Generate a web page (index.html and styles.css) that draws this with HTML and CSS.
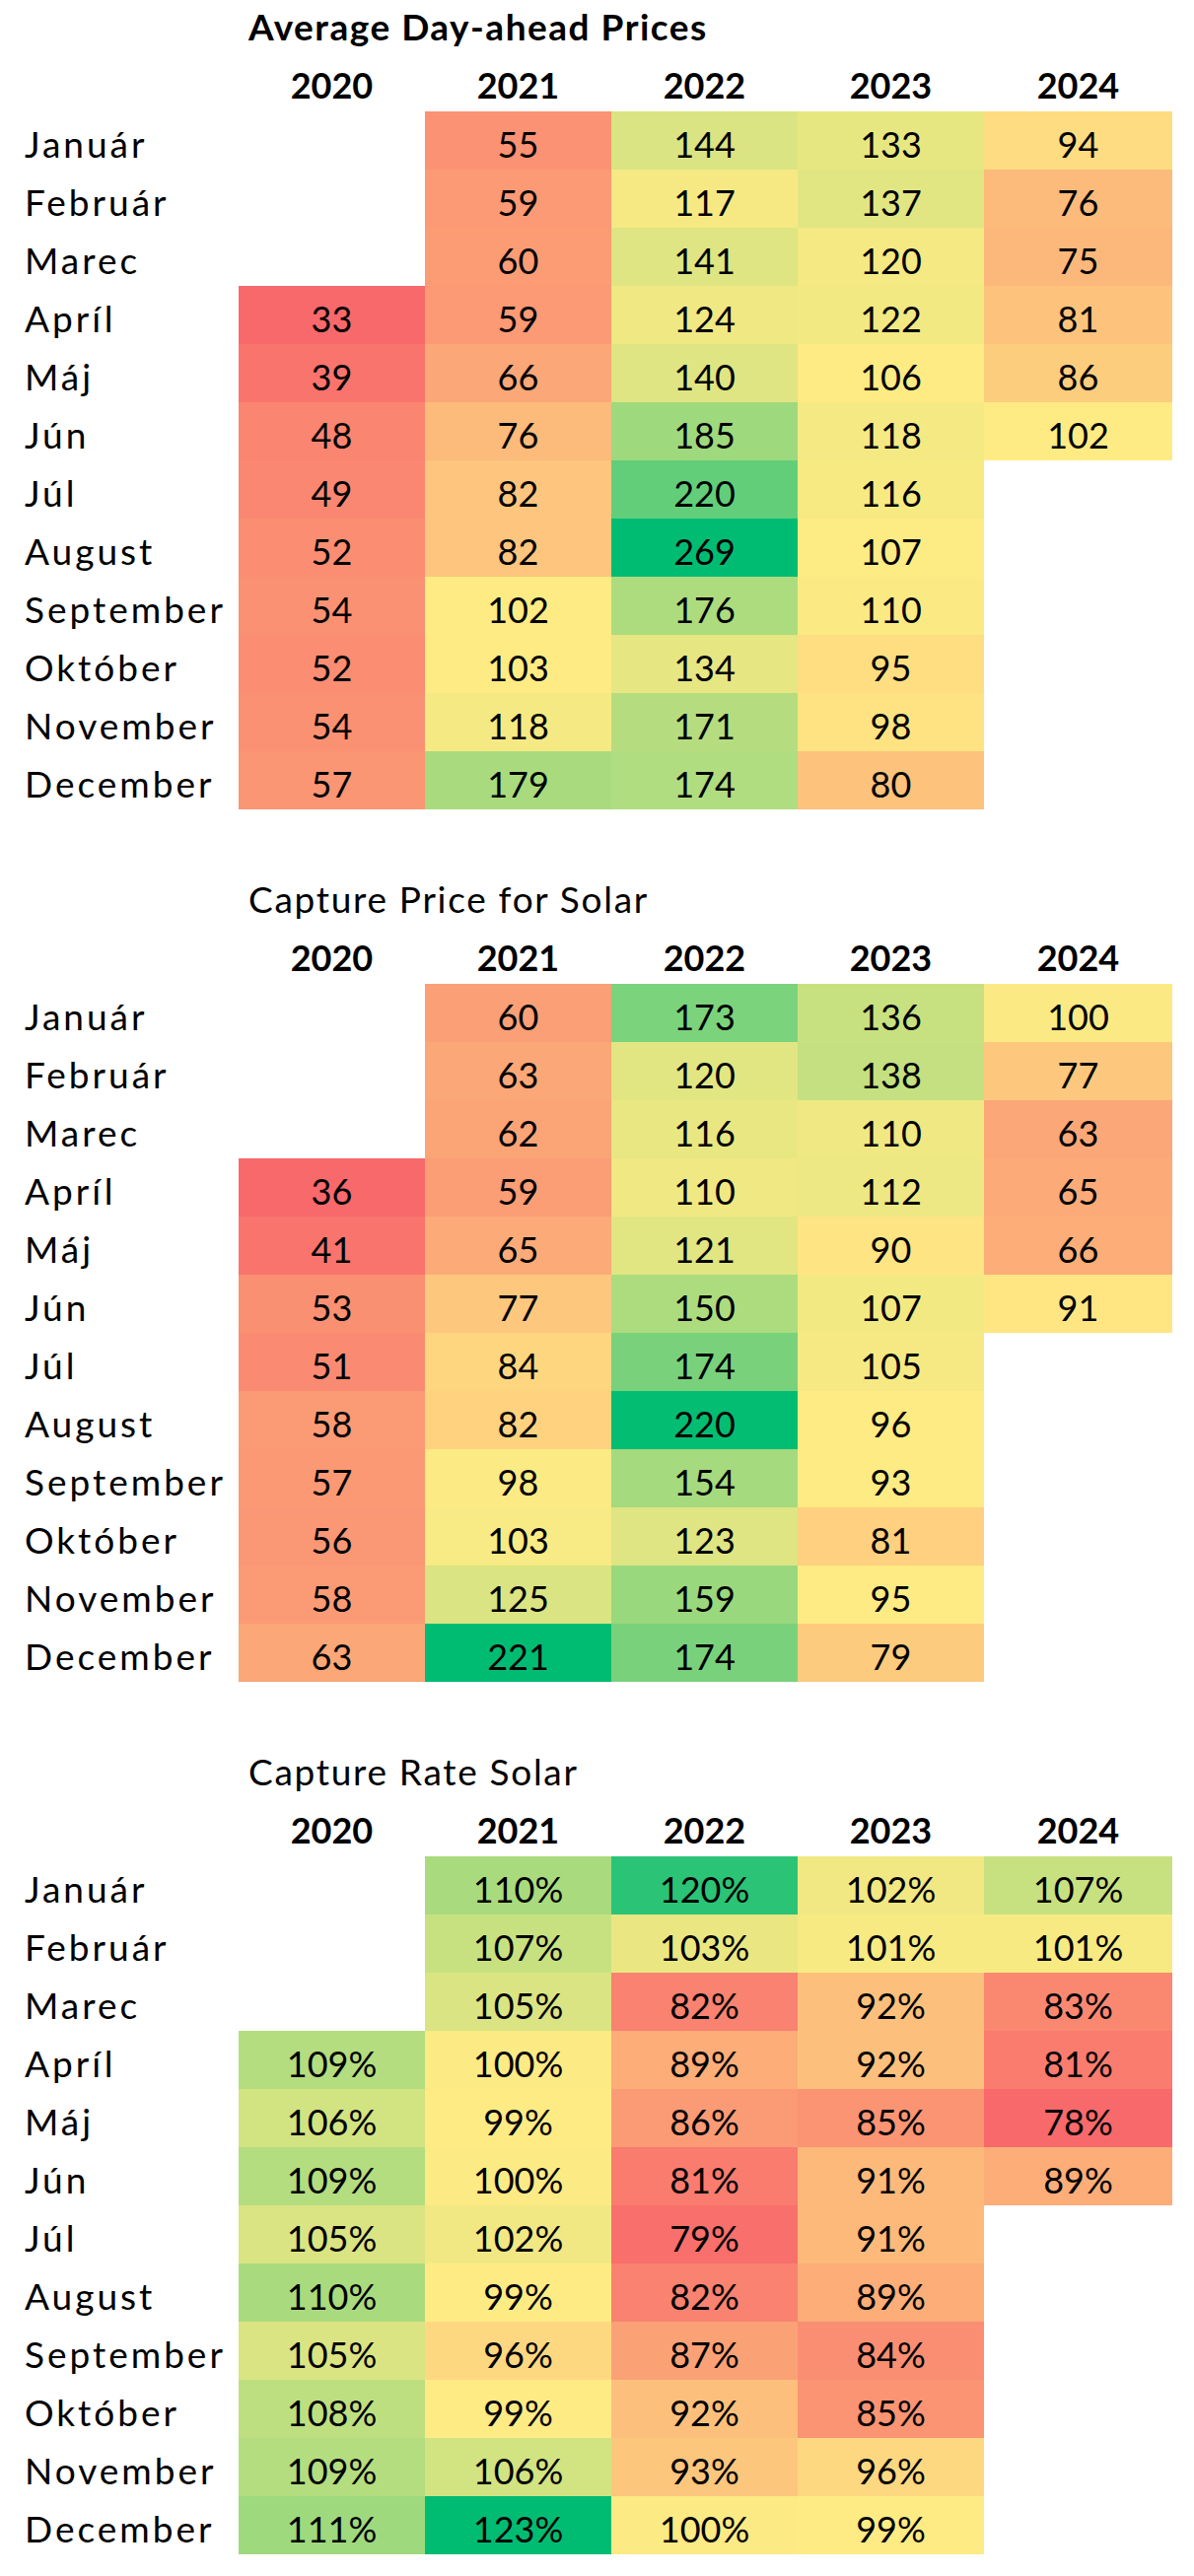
FILE: index.html
```html
<!DOCTYPE html>
<html lang="sk">
<head>
<meta charset="utf-8">
<title>Prices</title>
<link rel="stylesheet" href="styles.css">
</head>
<body>
<main class="sheet">
  <section class="block first">
    <div class="title bold">Average Day-ahead Prices</div>
    <div class="corner"></div><div class="year">2020</div><div class="year">2021</div><div class="year">2022</div><div class="year">2023</div><div class="year">2024</div>
    <div class="lbl">Január</div><div class="c"></div><div class="c v">55</div><div class="c v">144</div><div class="c v">133</div><div class="c v">94</div>
    <div class="lbl">Február</div><div class="c"></div><div class="c v">59</div><div class="c v">117</div><div class="c v">137</div><div class="c v">76</div>
    <div class="lbl">Marec</div><div class="c"></div><div class="c v">60</div><div class="c v">141</div><div class="c v">120</div><div class="c v">75</div>
    <div class="lbl">Apríl</div><div class="c v">33</div><div class="c v">59</div><div class="c v">124</div><div class="c v">122</div><div class="c v">81</div>
    <div class="lbl">Máj</div><div class="c v">39</div><div class="c v">66</div><div class="c v">140</div><div class="c v">106</div><div class="c v">86</div>
    <div class="lbl">Jún</div><div class="c v">48</div><div class="c v">76</div><div class="c v">185</div><div class="c v">118</div><div class="c v">102</div>
    <div class="lbl">Júl</div><div class="c v">49</div><div class="c v">82</div><div class="c v">220</div><div class="c v">116</div><div class="c"></div>
    <div class="lbl">August</div><div class="c v">52</div><div class="c v">82</div><div class="c v">269</div><div class="c v">107</div><div class="c"></div>
    <div class="lbl">September</div><div class="c v">54</div><div class="c v">102</div><div class="c v">176</div><div class="c v">110</div><div class="c"></div>
    <div class="lbl">Október</div><div class="c v">52</div><div class="c v">103</div><div class="c v">134</div><div class="c v">95</div><div class="c"></div>
    <div class="lbl">November</div><div class="c v">54</div><div class="c v">118</div><div class="c v">171</div><div class="c v">98</div><div class="c"></div>
    <div class="lbl">December</div><div class="c v">57</div><div class="c v">179</div><div class="c v">174</div><div class="c v">80</div><div class="c"></div>
  </section>

  <section class="block">
    <div class="title">Capture Price for Solar</div>
    <div class="corner"></div><div class="year">2020</div><div class="year">2021</div><div class="year">2022</div><div class="year">2023</div><div class="year">2024</div>
    <div class="lbl">Január</div><div class="c"></div><div class="c v">60</div><div class="c v">173</div><div class="c v">136</div><div class="c v">100</div>
    <div class="lbl">Február</div><div class="c"></div><div class="c v">63</div><div class="c v">120</div><div class="c v">138</div><div class="c v">77</div>
    <div class="lbl">Marec</div><div class="c"></div><div class="c v">62</div><div class="c v">116</div><div class="c v">110</div><div class="c v">63</div>
    <div class="lbl">Apríl</div><div class="c v">36</div><div class="c v">59</div><div class="c v">110</div><div class="c v">112</div><div class="c v">65</div>
    <div class="lbl">Máj</div><div class="c v">41</div><div class="c v">65</div><div class="c v">121</div><div class="c v">90</div><div class="c v">66</div>
    <div class="lbl">Jún</div><div class="c v">53</div><div class="c v">77</div><div class="c v">150</div><div class="c v">107</div><div class="c v">91</div>
    <div class="lbl">Júl</div><div class="c v">51</div><div class="c v">84</div><div class="c v">174</div><div class="c v">105</div><div class="c"></div>
    <div class="lbl">August</div><div class="c v">58</div><div class="c v">82</div><div class="c v">220</div><div class="c v">96</div><div class="c"></div>
    <div class="lbl">September</div><div class="c v">57</div><div class="c v">98</div><div class="c v">154</div><div class="c v">93</div><div class="c"></div>
    <div class="lbl">Október</div><div class="c v">56</div><div class="c v">103</div><div class="c v">123</div><div class="c v">81</div><div class="c"></div>
    <div class="lbl">November</div><div class="c v">58</div><div class="c v">125</div><div class="c v">159</div><div class="c v">95</div><div class="c"></div>
    <div class="lbl">December</div><div class="c v">63</div><div class="c v">221</div><div class="c v">174</div><div class="c v">79</div><div class="c"></div>
  </section>

  <section class="block">
    <div class="title">Capture Rate Solar</div>
    <div class="corner"></div><div class="year">2020</div><div class="year">2021</div><div class="year">2022</div><div class="year">2023</div><div class="year">2024</div>
    <div class="lbl">Január</div><div class="c"></div><div class="c v">110%</div><div class="c v">120%</div><div class="c v">102%</div><div class="c v">107%</div>
    <div class="lbl">Február</div><div class="c"></div><div class="c v">107%</div><div class="c v">103%</div><div class="c v">101%</div><div class="c v">101%</div>
    <div class="lbl">Marec</div><div class="c"></div><div class="c v">105%</div><div class="c v">82%</div><div class="c v">92%</div><div class="c v">83%</div>
    <div class="lbl">Apríl</div><div class="c v">109%</div><div class="c v">100%</div><div class="c v">89%</div><div class="c v">92%</div><div class="c v">81%</div>
    <div class="lbl">Máj</div><div class="c v">106%</div><div class="c v">99%</div><div class="c v">86%</div><div class="c v">85%</div><div class="c v">78%</div>
    <div class="lbl">Jún</div><div class="c v">109%</div><div class="c v">100%</div><div class="c v">81%</div><div class="c v">91%</div><div class="c v">89%</div>
    <div class="lbl">Júl</div><div class="c v">105%</div><div class="c v">102%</div><div class="c v">79%</div><div class="c v">91%</div><div class="c"></div>
    <div class="lbl">August</div><div class="c v">110%</div><div class="c v">99%</div><div class="c v">82%</div><div class="c v">89%</div><div class="c"></div>
    <div class="lbl">September</div><div class="c v">105%</div><div class="c v">96%</div><div class="c v">87%</div><div class="c v">84%</div><div class="c"></div>
    <div class="lbl">Október</div><div class="c v">108%</div><div class="c v">99%</div><div class="c v">92%</div><div class="c v">85%</div><div class="c"></div>
    <div class="lbl">November</div><div class="c v">109%</div><div class="c v">106%</div><div class="c v">93%</div><div class="c v">96%</div><div class="c"></div>
    <div class="lbl">December</div><div class="c v">111%</div><div class="c v">123%</div><div class="c v">100%</div><div class="c v">99%</div><div class="c"></div>
  </section>
</main>
<script src="script.js"></script>
</body>
</html>
```

FILE: styles.css
```css
html, body {
  margin: 0;
  padding: 0;
  background: #ffffff;
}

body {
  font-family: Lato, "Open Sans", "Liberation Sans", sans-serif;
  font-size: 36px;
  color: #000000;
  overflow: hidden;
}

.sheet {
  display: flex;
  flex-direction: column;
  gap: 59px;
  width: 1211px;
}

.block {
  display: grid;
  grid-template-columns: 242px 189px 189px 189px 189px 191px;
  grid-auto-rows: 59px;
}

.block.first {
  margin-top: -5px;
}

.title {
  grid-column: 2 / -1;
  display: flex;
  align-items: flex-end;
  padding: 0 0 9px 10px;
  font-size: 37px;
  letter-spacing: 1.7px;
  line-height: 1;
  white-space: nowrap;
}

.bold {
  font-weight: 700;
  letter-spacing: 1.5px;
}

.year {
  display: flex;
  align-items: flex-end;
  justify-content: center;
  padding-bottom: 9px;
  line-height: 1;
  font-weight: 700;
}

.lbl {
  display: flex;
  align-items: flex-end;
  padding: 0 0 8px 25px;
  font-size: 37px;
  line-height: 1;
  letter-spacing: 3px;
  white-space: nowrap;
}

.c {
  display: flex;
  align-items: flex-end;
  justify-content: center;
  padding-bottom: 8px;
  line-height: 1;
}
```

FILE: script.js
```js
(function () {
  var RED = [248, 105, 107];
  var YEL = [255, 235, 132];
  var GRN = [0, 188, 115];

  function mix(a, b, t) {
    return 'rgb(' + a.map(function (x, i) {
      return Math.round(x + (b[i] - x) * t);
    }).join(',') + ')';
  }

  document.querySelectorAll('.block').forEach(function (block) {
    var cells = Array.prototype.slice.call(block.querySelectorAll('.v'));
    var vals = cells.map(function (c) { return parseFloat(c.textContent); });
    var s = vals.slice().sort(function (a, b) { return a - b; });
    var n = s.length;
    var pos = (n - 1) * 0.5;
    var lo = Math.floor(pos), hi = Math.ceil(pos);
    var mid = s[lo] + (s[hi] - s[lo]) * (pos - lo);
    var min = s[0], max = s[n - 1];
    cells.forEach(function (c, i) {
      var v = vals[i], col;
      if (v <= mid) {
        col = mix(RED, YEL, (v - min) / (mid - min));
      } else {
        col = mix(YEL, GRN, Math.pow((v - mid) / (max - mid), 1.4));
      }
      c.style.backgroundColor = col;
    });
  });
})();
```
